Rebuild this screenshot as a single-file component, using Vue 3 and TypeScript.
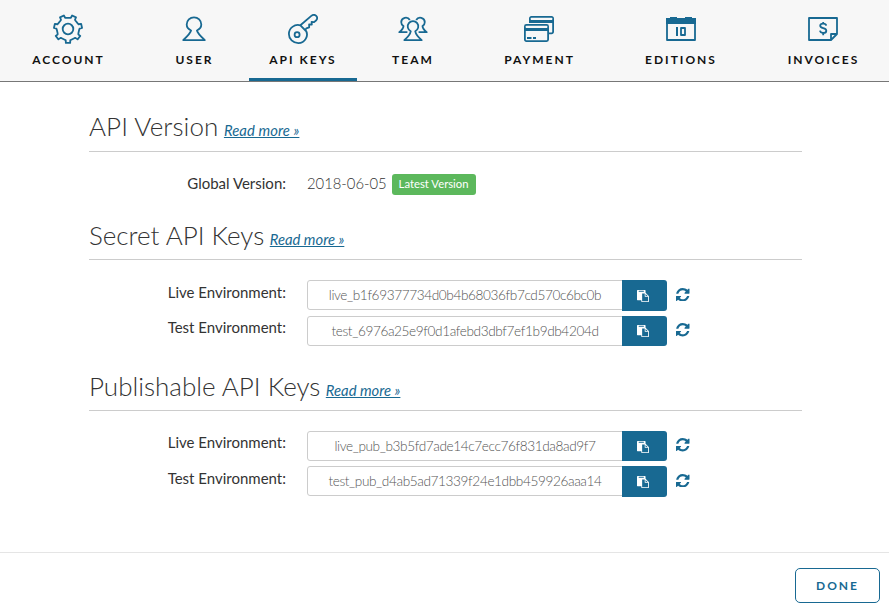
<script setup lang="ts">
interface Tab {
  id: string
  label: string
}

interface ApiKey {
  label: string
  value: string
}

interface KeyGroup {
  title: string
  keys: ApiKey[]
}

const tabs: Tab[] = [
  { id: 'account', label: 'Account' },
  { id: 'user', label: 'User' },
  { id: 'keys', label: 'API Keys' },
  { id: 'team', label: 'Team' },
  { id: 'payment', label: 'Payment' },
  { id: 'editions', label: 'Editions' },
  { id: 'invoices', label: 'Invoices' },
]
const activeTab = 'keys'

const groups: KeyGroup[] = [
  {
    title: 'Secret API Keys',
    keys: [
      { label: 'Live Environment:', value: 'live_b1f69377734d0b4b68036fb7cd570c6bc0b' },
      { label: 'Test Environment:', value: 'test_6976a25e9f0d1afebd3dbf7ef1b9db4204d' },
    ],
  },
  {
    title: 'Publishable API Keys',
    keys: [
      { label: 'Live Environment:', value: 'live_pub_b3b5fd7ade14c7ecc76f831da8ad9f7' },
      { label: 'Test Environment:', value: 'test_pub_d4ab5ad71339f24e1dbb459926aaa14' },
    ],
  },
]

// Seven-toothed gear outline with one tooth pointing straight down.
function gearPath(teeth: number, outer: number, inner: number): string {
  const step = 360 / teeth
  const profile: [number, number][] = [
    [-0.33, inner],
    [-0.22, inner + 0.4],
    [-0.17, outer],
    [0.17, outer],
    [0.22, inner + 0.4],
    [0.33, inner],
  ]
  const points: string[] = []
  for (let i = 0; i < teeth; i++) {
    for (const [offset, radius] of profile) {
      const angle = ((90 + (i + offset) * step) * Math.PI) / 180
      points.push(`${(15 + radius * Math.cos(angle)).toFixed(2)} ${(15 + radius * Math.sin(angle)).toFixed(2)}`)
    }
  }
  return `M${points.join('L')}Z`
}
const gear = gearPath(7, 14.1, 11.2)
</script>

<template>
  <div class="page">
    <nav class="tabs">
      <a v-for="tab in tabs" :key="tab.id" class="tab" :class="{ active: tab.id === activeTab }">
        <svg class="tab-icon" viewBox="0 0 30 30" width="30" height="30">
          <g v-if="tab.id === 'account'">
            <path :d="gear" />
            <circle cx="15" cy="15" r="5.3" />
          </g>
          <path
            v-else-if="tab.id === 'user'"
            d="M12.1 16.5C9.2 15.2 7.7 13 7.7 10.6a7.3 7.3 0 0 1 14.6 0C22.3 13 20.8 15.2 17.9 16.5C18.7 19.6 22 22.6 25.8 26.1H4.2C8 22.6 11.3 19.6 12.1 16.5Z"
          />
          <g v-else-if="tab.id === 'keys'">
            <path
              d="M12.4 11.3L23.3 1.9C25 .5 27 .7 28.2 1.9C29.4 3.2 29.4 5.1 28 6.5L26.1 8.1L23.6 7.8L23.8 10.6L21.1 10.5L21.2 13.3L18.3 14.4L17.4 15.8C21.5 21.5 16.9 29.1 10.3 29.1C5 29.1.9 25 .9 19.9C.9 14.3 6.5 9.6 12.4 11.3L18 17"
            />
            <circle cx="9.1" cy="20.7" r="2.5" />
          </g>
          <g v-else-if="tab.id === 'team'">
            <path d="M12.8 17.2A5.3 5.3 0 1 1 17.2 17.2C17.8 20.6 20.6 23.6 23.7 26.1H6.3C9.4 23.6 12.2 20.6 12.8 17.2Z" />
            <path d="M9.4 18.2H1.3C4 16 5.4 14.3 5.5 12.1C3.6 11.1 3.2 9.4 3.2 8.1A4.6 4.6 0 0 1 11.8 6" />
            <path d="M20.6 18.2H28.7C26 16 24.6 14.3 24.5 12.1C26.4 11.1 26.8 9.4 26.8 8.1A4.6 4.6 0 0 0 18.2 6" />
          </g>
          <g v-else-if="tab.id === 'payment'">
            <path d="M5.9 9V4.4a1.5 1.5 0 0 1 1.5-1.5h20.2a1.5 1.5 0 0 1 1.5 1.5v13.4a1.5 1.5 0 0 1-1.5 1.5H25" />
            <rect x=".9" y="10.9" width="23.2" height="16.2" rx="1.5" />
            <path class="solid" d="M6 5H29V9H6ZM1 13H24V17H1ZM3 23H7.5V25H3ZM9 23H12V25H9Z" />
            <path class="paper" d="M6.8 4H28.2V6H6.8ZM1.8 12H23.2V14H1.8Z" />
          </g>
          <g v-else-if="tab.id === 'editions'">
            <rect x="1" y="5" width="28" height="21" />
            <path class="solid" d="M0 4H4V3H11V4H19V3H26V4H30V10H0ZM10 13H12V22H10Z" />
            <rect x="15" y="14" width="4" height="7" />
          </g>
          <g v-else>
            <path d="M23 26H1V4H29V20L23 26V20H29" />
            <path d="M18.2 11.7C18 10.2 16.8 9.6 15.2 9.6C13.4 9.6 12.2 10.4 12.2 11.8C12.2 15.1 18.3 13.3 18.3 16.7C18.3 18 17.2 19 15.3 19C13.4 19 12.2 18 12 16.7M15.2 8V9.7M15.2 19V21.3" />
          </g>
        </svg>
        <span class="tab-label">{{ tab.label }}</span>
      </a>
    </nav>

    <main class="content">
      <section class="version">
        <h2 class="heading">API Version <a class="more">Read more »</a></h2>
        <div class="version-row">
          <span class="label">Global Version:</span>
          <span class="date">2018-06-05</span>
          <span class="badge">Latest Version</span>
        </div>
      </section>

      <section v-for="group in groups" :key="group.title" class="group">
        <h2 class="heading">{{ group.title }} <a class="more">Read more »</a></h2>
        <div class="rows">
          <div v-for="key in group.keys" :key="key.value" class="row">
            <label class="label">{{ key.label }}</label>
            <div class="field">{{ key.value }}</div>
            <button class="copy" type="button" aria-label="Copy">
              <svg width="12" height="12" viewBox="0 0 1792 1792">
                <path
                  d="M768 1664h896v-640h-416q-40 0-68-28t-28-68v-416h-384v1152zm256-1440v-64q0-13-9.5-22.5t-22.5-9.5h-704q-13 0-22.5 9.5t-9.5 22.5v64q0 13 9.5 22.5t22.5 9.5h704q13 0 22.5-9.5t9.5-22.5zm256 672h299l-299-299v299zm512 128v672q0 40-28 68t-68 28h-960q-40 0-68-28t-28-68v-160h-544q-40 0-68-28t-28-68v-1344q0-40 28-68t68-28h1088q40 0 68 28t28 68v328q21 13 36 28l408 408q28 28 48 76t20 88z"
                />
              </svg>
            </button>
            <svg class="refresh" width="13.5" height="13.5" viewBox="0 128 1536 1536">
              <path
                d="M1511 1056q0 5-1 7-64 268-268 434.5t-478 166.5q-146 0-282.5-55t-243.5-157l-129 129q-19 19-45 19t-45-19-19-45v-448q0-26 19-45t45-19h448q26 0 45 19t19 45-19 45l-137 137q71 66 161 102t187 36q134 0 250-65t186-179q11-17 53-117 8-23 30-23h192q13 0 22.5 9.5t9.5 22.5zm25-800v448q0 26-19 45t-45 19h-448q-26 0-45-19t-19-45 19-45l138-138q-148-137-349-137-134 0-250 65t-186 179q-11 17-53 117-8 23-30 23h-199q-13 0-22.5-9.5t-9.5-22.5v-7q65-268 270-434.5t480-166.5q146 0 284 55.5t245 156.5l130-129q19-19 45-19t45 19 19 45z"
              />
            </svg>
          </div>
        </div>
      </section>
    </main>

    <footer class="footer">
      <button class="done" type="button">Done</button>
    </footer>
  </div>
</template>

<style>
body {
  background: #fff;
}
</style>

<style scoped>
.page {
  display: flex;
  flex-direction: column;
  box-sizing: border-box;
  height: 610px;
  overflow: hidden;
  font-family: Lato, sans-serif;
  color: #333;
}
.tabs {
  display: grid;
  grid-template-columns: 136px 113px 108px 112px 140px 143px 1fr;
  box-sizing: border-box;
  height: 82px;
  background: #f7f7f7;
  border-bottom: 1px solid #777;
}
.tab {
  display: flex;
  flex-direction: column;
  align-items: center;
  box-sizing: border-box;
  padding-top: 14px;
  border-bottom: 3px solid transparent;
}
.tab:nth-child(2) {
  padding-left: 3px;
}
.tab:last-child {
  padding-left: 5px;
}
.tab.active {
  border-bottom-color: #186992;
}
.tab-icon {
  display: block;
  fill: none;
  stroke: #186992;
  stroke-width: 1.8;
  stroke-linejoin: round;
}
.tab-icon .solid {
  fill: #186992;
  stroke: none;
}
.tab-icon .paper {
  fill: #f7f7f7;
  stroke: none;
}
.tab-label {
  margin-top: 8px;
  padding-left: 1px;
  font-size: 12px;
  line-height: 16px;
  font-weight: 700;
  letter-spacing: 2px;
  text-transform: uppercase;
  white-space: nowrap;
  color: #111;
}
.tab.active .tab-label,
.tab.active + .tab .tab-label {
  padding-left: 0;
}
.content {
  flex: 1;
  width: 713px;
  margin-left: 89px;
}
.heading {
  box-sizing: border-box;
  height: 40px;
  margin: 0;
  border-bottom: 1px solid #ccc;
  font-size: 26px;
  line-height: 29px;
  font-weight: 300;
  white-space: nowrap;
}
.version .heading {
  letter-spacing: 0.08px;
}
.group .heading {
  line-height: 31px;
}
.more {
  margin-left: -1.6px;
  font-size: 14.8px;
  font-weight: 400;
  font-style: italic;
  text-decoration: underline;
  color: #186992;
}
.version {
  height: 108.4px;
  padding-top: 30px;
}
.version-row {
  display: flex;
  align-items: center;
  height: 64px;
}
.label {
  width: 197px;
  margin-right: 21px;
  font-size: 15px;
  line-height: 20px;
  text-align: right;
}
.version-row .label,
.date {
  margin-top: -2px;
}
.date {
  font-size: 14.8px;
  font-weight: 300;
}
.badge {
  margin-left: 5px;
  padding: 0 7px 1px;
  border-radius: 3px;
  background: #5cb85c;
  color: #fff;
  font-size: 11.3px;
  line-height: 20px;
}
.group {
  height: 150.8px;
}
.rows {
  display: flex;
  flex-direction: column;
  gap: 5px;
  padding-top: 19.7px;
}
.row {
  display: flex;
  align-items: flex-start;
  height: 30.5px;
}
.row .label {
  padding-top: 1.5px;
}
.field {
  box-sizing: border-box;
  width: 316px;
  height: 30px;
  border: 1px solid #ccc;
  border-radius: 3px 0 0 3px;
  font-size: 13.6px;
  line-height: 28px;
  font-weight: 300;
  letter-spacing: -0.38px;
  text-align: center;
  color: #555;
}
.copy {
  display: flex;
  align-items: center;
  justify-content: center;
  width: 45px;
  height: 30.5px;
  margin: 0 0 0 -1px;
  padding: 1px 3px 0 0;
  border: 0;
  border-radius: 0 3px 3px 0;
  background: #186992;
}
.copy svg {
  fill: #fff;
}
.refresh {
  margin: 7.5px 0 0 9px;
  fill: #186992;
}
.footer {
  display: flex;
  justify-content: flex-end;
  box-sizing: border-box;
  height: 58px;
  padding: 15px 9px 0 0;
  border-top: 1px solid #e5e5e5;
}
.done {
  box-sizing: border-box;
  width: 85px;
  height: 35px;
  padding: 0;
  border: 1px solid #186992;
  border-radius: 5px;
  background: #fff;
  color: #186992;
  font-family: inherit;
  font-size: 12px;
  font-weight: 700;
  letter-spacing: 2px;
  text-transform: uppercase;
}
</style>
